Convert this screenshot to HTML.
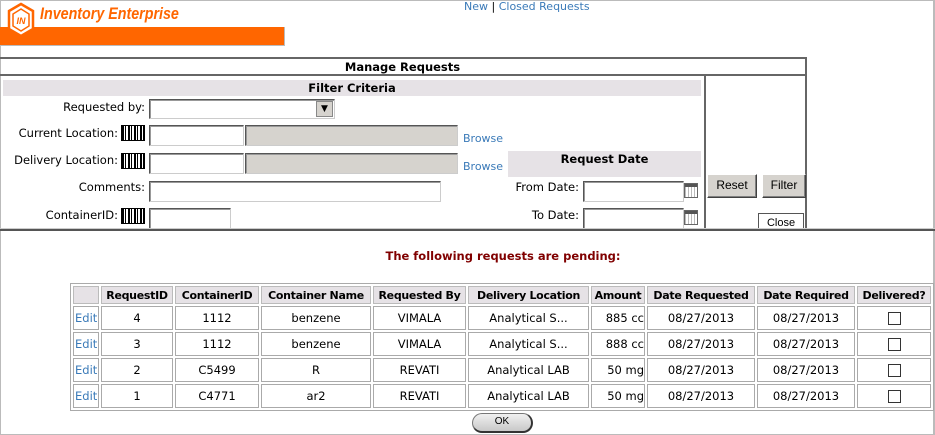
<!DOCTYPE html>
<html><head><meta charset="utf-8"><style>
*{margin:0;padding:0;box-sizing:border-box}
body{width:935px;height:435px;position:relative;background:#fff;font-family:"DejaVu Sans","Liberation Sans",sans-serif;font-size:11.5px;color:#000;overflow:hidden}
.a{position:absolute}
.lbl{position:absolute;text-align:right;font-size:11.5px;white-space:nowrap}
.in{position:absolute;background:#fff;border:1px solid #ccc;border-top-color:#555;border-left-color:#555;box-shadow:inset 1px 1px 0 #999}
.gr{background:#d6d3ce}
.bc{position:absolute;width:24px;height:16px;border:1px solid #000;background:repeating-linear-gradient(90deg,#000 0 2px,#fff 2px 3px,#000 3px 4px,#fff 4px 6px)}
.btn{position:absolute;background:#d6d3ce;border:1px solid;border-color:#fff #404040 #404040 #fff;box-shadow:inset -1px -1px 0 #808080;font-size:12px;text-align:center;line-height:20px;font-family:"Liberation Sans",sans-serif}
.lnk{color:#3a7ab8}
.cal{position:absolute;width:14px;height:15px;border:1px solid #666;background:repeating-linear-gradient(90deg,#bbb 0 1px,#fff 1px 3px),#fff}
.cal:before{content:"";position:absolute;left:0;right:0;top:0;height:3px;background:#555}
table{position:absolute;left:70px;top:283px;width:864px;border-collapse:separate;border-spacing:2px;border:1px solid #aaa;table-layout:fixed}
td,th{border:1px solid #aaa;height:24px;text-align:center;font-size:11.5px;white-space:nowrap;overflow:hidden;padding:0}
th{background:#e6e2e6;font-weight:bold;height:18px;border-color:#bbb;font-size:11px;letter-spacing:-0.3px}
td.e{color:#3a7ab8;text-align:left;padding-left:1px}
.cb{display:inline-block;width:13px;height:13px;border:1px solid #333;vertical-align:middle}
</style></head><body>
<div class="a" style="left:0;top:0;width:935px;height:435px;border:1px solid #bbb;border-right:2px solid #bbb"></div>
<div class="a" style="left:0;top:27px;width:285px;height:19px;background:#ff6600;border-bottom:1px solid #bbb;border-right:1px solid #bbb"></div>
<svg class="a" style="left:6px;top:2px" width="30" height="36" viewBox="0 0 30 36">
<polygon points="15,2 27,9 27,27 15,34 3,27 3,9" fill="#fff" stroke="#ff6600" stroke-width="2.5"/>
<polygon points="15,7 23,12 23,24 15,29 7,24 7,12" fill="none" stroke="#ff6600" stroke-width="1.5"/>
<text x="15" y="22" text-anchor="middle" font-family="Liberation Sans" font-weight="bold" font-style="italic" font-size="9" fill="#ff6600">IN</text>
</svg>
<div class="a" style="left:40px;top:4px;font-family:'Liberation Sans',sans-serif;font-weight:bold;font-style:italic;font-size:17px;color:#ff6600;transform:scaleX(0.84);transform-origin:left;white-space:nowrap">Inventory Enterprise</div>
<div class="a" style="left:464px;top:0px;font-size:11px"><span class="lnk">New</span> | <span class="lnk">Closed Requests</span></div>
<div class="a" style="left:0;top:57px;width:807px;height:172px;border:2px solid #666;border-bottom:none;border-left:none"></div>
<div class="a" style="left:0;top:74px;width:807px;height:2px;background:#666"></div>
<div class="a" style="left:704px;top:74px;width:2px;height:155px;background:#666"></div>
<div class="a" style="left:0;top:59px;width:805px;text-align:center;font-weight:bold;line-height:16px">Manage Requests</div>
<div class="a" style="left:3px;top:80px;width:698px;height:16px;background:#e6e2e6;text-align:center;font-weight:bold;line-height:16px">Filter Criteria</div>
<div class="lbl" style="right:790px;top:100px">Requested by:</div>
<div class="in" style="left:149px;top:99px;width:186px;height:20px"></div>
<div class="a" style="left:316px;top:101px;width:17px;height:16px;background:#d6d3ce;border:1px solid #888;font-size:9px;text-align:center;line-height:14px">&#9660;</div>
<div class="lbl" style="right:817px;top:126px">Current Location:</div>
<div class="bc" style="left:121px;top:125px"></div>
<div class="in" style="left:149px;top:125px;width:95px;height:21px"></div>
<div class="in gr" style="left:245px;top:125px;width:213px;height:21px"></div>
<div class="a lnk" style="left:463px;top:132px;font-size:11px">Browse</div>
<div class="lbl" style="right:817px;top:153px">Delivery Location:</div>
<div class="bc" style="left:121px;top:153px"></div>
<div class="in" style="left:149px;top:153px;width:95px;height:21px"></div>
<div class="in gr" style="left:245px;top:153px;width:213px;height:21px"></div>
<div class="a lnk" style="left:463px;top:160px;font-size:11px">Browse</div>
<div class="a" style="left:508px;top:151px;width:193px;height:26px;background:#e6e2e6;text-align:center;font-weight:bold;line-height:17px">Request Date</div>
<div class="lbl" style="right:790px;top:180px">Comments:</div>
<div class="in" style="left:149px;top:181px;width:292px;height:21px"></div>
<div class="lbl" style="right:356px;top:180px">From Date:</div>
<div class="in" style="left:583px;top:181px;width:101px;height:21px"></div>
<div class="cal" style="left:684px;top:183px"></div>
<div class="btn" style="left:707px;top:174px;width:50px;height:24px">Reset</div>
<div class="btn" style="left:762px;top:174px;width:44px;height:24px">Filter</div>
<div class="lbl" style="right:817px;top:208px">ContainerID:</div>
<div class="bc" style="left:121px;top:208px"></div>
<div class="in" style="left:149px;top:208px;width:82px;height:21px"></div>
<div class="lbl" style="right:356px;top:208px">To Date:</div>
<div class="in" style="left:583px;top:208px;width:101px;height:21px"></div>
<div class="cal" style="left:684px;top:210px"></div>
<div class="a" style="left:758px;top:213px;width:46px;height:16px;border:1px solid #555;background:#fff;font-size:11px;text-align:center;line-height:18px;font-family:'Liberation Sans',sans-serif;overflow:hidden">Close</div>
<div class="a" style="left:0;top:228px;width:935px;height:1px;background:#ccc"></div>
<div class="a" style="left:0;top:229px;width:935px;height:2px;background:#555"></div>
<div class="a" style="left:0;top:249px;width:1006px;text-align:center;font-weight:bold;color:#800000">The following requests are pending:</div>
<table>
<colgroup><col style="width:26px"><col style="width:72px"><col style="width:84px"><col style="width:110px"><col style="width:93px"><col style="width:121px"><col style="width:54px"><col style="width:108px"><col style="width:98px"><col style="width:74px"></colgroup>
<tr><th></th><th>RequestID</th><th>ContainerID</th><th>Container Name</th><th>Requested By</th><th>Delivery Location</th><th>Amount</th><th>Date Requested</th><th>Date Required</th><th>Delivered?</th></tr>
<tr><td class="e">Edit</td><td>4</td><td>1112</td><td>benzene</td><td>VIMALA</td><td>Analytical S...</td><td style="text-align:right">885 cc</td><td>08/27/2013</td><td>08/27/2013</td><td><span class="cb"></span></td></tr>
<tr><td class="e">Edit</td><td>3</td><td>1112</td><td>benzene</td><td>VIMALA</td><td>Analytical S...</td><td style="text-align:right">888 cc</td><td>08/27/2013</td><td>08/27/2013</td><td><span class="cb"></span></td></tr>
<tr><td class="e">Edit</td><td>2</td><td>C5499</td><td>R</td><td>REVATI</td><td>Analytical LAB</td><td style="text-align:right">50 mg</td><td>08/27/2013</td><td>08/27/2013</td><td><span class="cb"></span></td></tr>
<tr><td class="e">Edit</td><td>1</td><td>C4771</td><td>ar2</td><td>REVATI</td><td>Analytical LAB</td><td style="text-align:right">50 mg</td><td>08/27/2013</td><td>08/27/2013</td><td><span class="cb"></span></td></tr>
</table>
<div class="a" style="left:472px;top:413px;width:61px;height:20px;border-radius:10px;background:linear-gradient(#f0f0f0,#c8c8c8);border:1px solid #777;border-bottom:2px solid #333;border-right:2px solid #333;font-size:10px;text-align:center;line-height:16px;font-family:'Liberation Sans',sans-serif">OK</div>
</body></html>
